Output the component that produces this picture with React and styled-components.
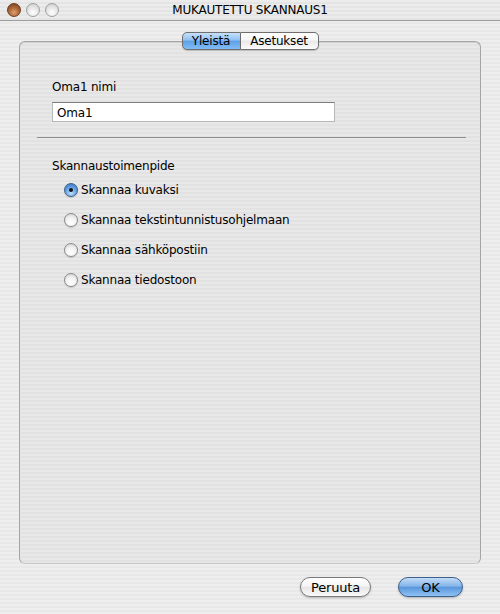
import React, { useState } from 'react';
import styled, { createGlobalStyle } from 'styled-components';

const GlobalStyle = createGlobalStyle`
  html, body {
    margin: 0;
    padding: 0;
  }
  body {
    font-family: "DejaVu Sans", "Liberation Sans", sans-serif;
    font-size: 12px;
    letter-spacing: -0.2px;
    color: #000;
  }
`;

const pinstripe = (a, b) => `repeating-linear-gradient(to bottom, ${a} 0px, ${a} 2px, ${b} 2px, ${b} 4px)`;

const Window = styled.div`
  width: 500px;
  height: 614px;
  display: flex;
  flex-direction: column;
  background: ${pinstripe('#eeeeee', '#e8e8e8')};
  overflow: hidden;
`;

const TitleBar = styled.div`
  height: 20px;
  flex: none;
  display: flex;
  align-items: center;
  position: relative;
  background: ${pinstripe('#ececec', '#e4e4e4')};
  border-bottom: 1px solid #9c9c9c;
`;

const Lights = styled.div`
  display: flex;
  gap: 5px;
  padding-left: 7px;
`;

const Light = styled.span`
  width: 14px;
  height: 14px;
  border-radius: 50%;
  box-sizing: border-box;
  border: 1px solid ${({ close }) => (close ? '#6b3f22' : '#a0a0a0')};
  background: ${({ close }) =>
    close
      ? 'radial-gradient(circle at 50% 70%, #e0a070 0%, #b06a3a 45%, #6e3a1a 100%)'
      : 'radial-gradient(circle at 50% 70%, #ffffff 0%, #e6e6e6 50%, #c4c4c4 100%)'};
`;

const Title = styled.div`
  position: absolute;
  left: 0;
  right: 0;
  text-align: center;
  font-size: 12px;
  pointer-events: none;
`;

const Body = styled.div`
  flex: 1;
  display: flex;
  flex-direction: column;
  padding: 11px 19px 0 19px;
`;

const TabRow = styled.div`
  display: flex;
  justify-content: center;
  margin-bottom: -9px;
  position: relative;
  z-index: 1;
`;

const Tab = styled.button`
  height: 18px;
  padding: 0;
  width: ${({ w }) => w}px;
  font-family: inherit;
  font-size: 12px;
  letter-spacing: inherit;
  color: #000;
  border: 1px solid #6f6f6f;
  box-sizing: border-box;
  cursor: pointer;
  border-radius: ${({ first, last }) =>
    first ? '5px 0 0 5px' : last ? '0 5px 5px 0' : '0'};
  border-left-width: ${({ first }) => (first ? 1 : 0)}px;
  background: ${({ active }) =>
    active
      ? 'linear-gradient(to bottom, #c6e0fa 0%, #8fc0f2 45%, #5d9fe6 50%, #82bdf5 100%)'
      : 'linear-gradient(to bottom, #ffffff 0%, #f6f6f6 45%, #e8e8e8 50%, #fbfbfb 100%)'};
  box-shadow: 0 1px 1px rgba(0, 0, 0, 0.2);
`;

const Panel = styled.div`
  height: 523px;
  box-sizing: border-box;
  border: 1px solid #a5a5a5;
  border-bottom-color: #c8c8c8;
  border-radius: 6px;
  background: ${pinstripe('#e8e8e8', '#e2e2e2')};
  box-shadow: inset 0 1px 0 #d0d0d0;
  display: flex;
  flex-direction: column;
  padding-top: 37px;
`;

const Section = styled.div`
  padding-left: 32px;
  display: flex;
  flex-direction: column;
`;

const Label = styled.div`
  line-height: 16px;
`;

const NameInput = styled.input`
  margin-top: 7px;
  width: 283px;
  height: 20px;
  box-sizing: border-box;
  border: 1px solid #b8b8b8;
  border-top-color: #7d7d7d;
  background: #fff;
  font-family: inherit;
  font-size: 12px;
  letter-spacing: inherit;
  padding: 1px 4px 0;
  outline: none;
`;

const Divider = styled.div`
  height: 1px;
  background: #8e8e8e;
  margin: 15px 14px 0 17px;
`;

const RadioSection = styled(Section)`
  margin-top: 20px;
`;

const RadioList = styled.div`
  display: flex;
  flex-direction: column;
  gap: 14px;
  margin-top: 8px;
  padding-left: 12px;
`;

const RadioRow = styled.label`
  display: flex;
  align-items: center;
  gap: 3px;
  height: 16px;
  cursor: pointer;
`;

const RadioDot = styled.span`
  width: 14px;
  height: 14px;
  border-radius: 50%;
  box-sizing: border-box;
  display: flex;
  align-items: center;
  justify-content: center;
  border: 1px solid ${({ checked }) => (checked ? '#3b5f8a' : '#8a8a8a')};
  background: ${({ checked }) =>
    checked
      ? 'radial-gradient(circle at 50% 75%, #bfe0ff 0%, #6fa8e6 45%, #2f6fc0 100%)'
      : 'radial-gradient(circle at 50% 75%, #ffffff 0%, #f2f2f2 50%, #c9c9c9 100%)'};
  box-shadow: 0 1px 1px rgba(0, 0, 0, 0.15);

  &::after {
    content: '';
    width: 4px;
    height: 4px;
    border-radius: 50%;
    background: #111;
    display: ${({ checked }) => (checked ? 'block' : 'none')};
  }
`;

const Footer = styled.div`
  display: flex;
  justify-content: flex-end;
  gap: 27px;
  padding: 13px 18px 0 0;
`;

const Button = styled.button`
  height: 20px;
  width: ${({ w }) => w}px;
  border-radius: 10px;
  box-sizing: border-box;
  font-family: inherit;
  font-size: 13px;
  letter-spacing: inherit;
  color: #000;
  padding: 0;
  cursor: pointer;
  border: 1px solid ${({ primary }) => (primary ? '#3d5f8c' : '#7a7a7a')};
  background: ${({ primary }) =>
    primary
      ? 'linear-gradient(to bottom, #c3dcf7 0%, #84b5ea 45%, #5a96dc 52%, #8fc3f4 100%)'
      : 'linear-gradient(to bottom, #ffffff 0%, #f4f4f4 45%, #e6e6e6 52%, #fafafa 100%)'};
  box-shadow: 0 1px 2px rgba(0, 0, 0, 0.25);
`;

const OPTIONS = [
  'Skannaa kuvaksi',
  'Skannaa tekstintunnistusohjelmaan',
  'Skannaa sähköpostiin',
  'Skannaa tiedostoon',
];

const App = () => {
  const [tab, setTab] = useState(0);
  const [action, setAction] = useState(0);
  const [name, setName] = useState('Oma1');

  return (
    <Window>
      <GlobalStyle />
      <TitleBar>
        <Lights>
          <Light close />
          <Light />
          <Light />
        </Lights>
        <Title>MUKAUTETTU SKANNAUS1</Title>
      </TitleBar>
      <Body>
        <TabRow>
          <Tab w={59} first active={tab === 0} onClick={() => setTab(0)}>Yleistä</Tab>
          <Tab w={78} last active={tab === 1} onClick={() => setTab(1)}>Asetukset</Tab>
        </TabRow>
        <Panel>
          <Section>
            <Label>Oma1 nimi</Label>
            <NameInput value={name} onChange={(e) => setName(e.target.value)} />
          </Section>
          <Divider />
          <RadioSection>
            <Label>Skannaustoimenpide</Label>
            <RadioList>
              {OPTIONS.map((option, index) => (
                <RadioRow key={option} onClick={() => setAction(index)}>
                  <RadioDot checked={action === index} />
                  {option}
                </RadioRow>
              ))}
            </RadioList>
          </RadioSection>
        </Panel>
        <Footer>
          <Button w={71}>Peruuta</Button>
          <Button w={65} primary>OK</Button>
        </Footer>
      </Body>
    </Window>
  );
};

export default App;
